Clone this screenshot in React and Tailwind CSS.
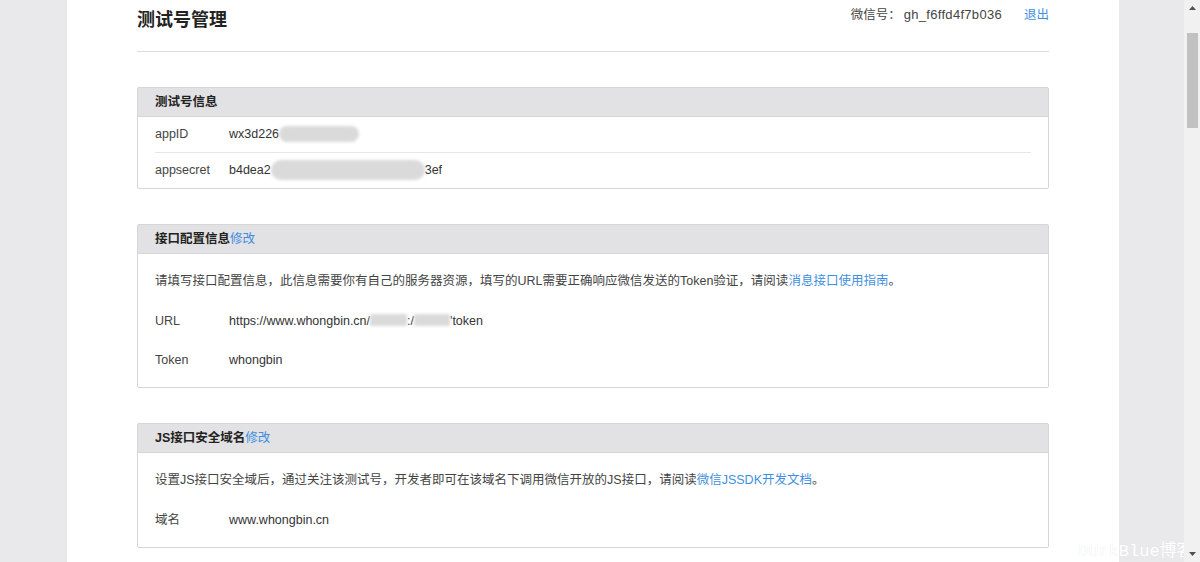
import React from "react";

const font = { fontFamily: '"Liberation Sans", "Noto Sans CJK SC", sans-serif' };

function Blob({ w, h = "h-[16px]", round = "rounded-full" }) {
    // mosaic-ish blur that hides part of a secret
    return <span className={`inline-block ${w} ${h} ${round} bg-[#dadada] blur-[1.5px] align-middle -mt-[2px]`}></span>;
}

function Panel({ title, edit, children }) {
    return (
        <div className="border border-[#d6d6d8] rounded-[2px] mb-[35px]">
            <div className="h-[29px] bg-[#e2e1e3] border-b border-[#d6d6d8] px-[17px] flex items-center font-bold text-[#222]">
                {title}
                {edit && <a className="text-[#3f8fe0] font-normal">修改</a>}
            </div>
            {children}
        </div>
    );
}

function Row({ label, children, className = "h-[40px]" }) {
    return (
        <div className={`flex items-center ${className}`}>
            <div className="w-[74px] text-[#444]">{label}</div>
            <div className="text-[#333]">{children}</div>
        </div>
    );
}

export default function App() {
    return (
        <div className="h-[562px] w-full overflow-hidden flex bg-[#e9e9ec] relative text-[12.5px] text-[#333]" style={font}>
            <div className="w-[67px] shrink-0"></div>

            {/* main page */}
            <div className="w-[1052px] shrink-0 bg-white px-[70px]">
                <div className="h-[52px] border-b border-[#dcdcdc] flex items-start justify-between">
                    <h1 className="text-[18px] font-bold text-[#222] leading-[28px] pt-[6px]">测试号管理</h1>
                    <div className="pt-[5px] leading-[20px] flex text-[#444]">
                        <span>微信号：</span>
                        <span className="ml-[3px] text-[13px] tracking-[0.3px]">gh_f6ffd4f7b036</span>
                        <a className="ml-[22px] text-[#3f8fe0]">退出</a>
                    </div>
                </div>

                <div className="pt-[35px]">
                    <Panel title="测试号信息">
                        <div className="px-[17px]">
                            <Row label="appID" className="h-[36px] border-b border-[#e6e6e6]">
                                wx3d226<Blob w="w-[80px]" />
                            </Row>
                            <Row label="appsecret" className="h-[35px]">
                                b4dea2<Blob w="w-[154px]" h="h-[20px]" />3ef
                            </Row>
                        </div>
                    </Panel>

                    <Panel title="接口配置信息" edit>
                        <div className="px-[17px] pt-[7px] pb-[7px]">
                            <div className="h-[40px] flex items-center text-[#444]">
                                请填写接口配置信息，此信息需要你有自己的服务器资源，填写的URL需要正确响应微信发送的Token验证，请阅读
                                <a className="text-[#3f8fe0]">消息接口使用指南</a>。
                            </div>
                            <Row label="URL">
                                https://www.whongbin.cn/
                                <Blob w="w-[37px]" h="h-[12px]" round="rounded-[1px]" />
                                :/
                                <Blob w="w-[36px]" h="h-[12px]" round="rounded-[1px]" />
                                'token
                            </Row>
                            <Row label="Token" className="h-[39px]">whongbin</Row>
                        </div>
                    </Panel>

                    <Panel title={<span>JS接口安全域名</span>} edit>
                        <div className="px-[17px] pt-[7px] pb-[7px]">
                            <div className="h-[40px] flex items-center text-[#444]">
                                设置JS接口安全域后，通过关注该测试号，开发者即可在该域名下调用微信开放的JS接口，请阅读
                                <a className="text-[#3f8fe0]">微信JSSDK开发文档</a>。
                            </div>
                            <Row label="域名">www.whongbin.cn</Row>
                        </div>
                    </Panel>
                </div>
            </div>

            <div className="flex-1"></div>

            {/* watermark, sits under the scrollbar */}
            <div className="absolute left-[1078px] bottom-[0px] text-[17px] leading-[20px] text-white whitespace-nowrap [text-shadow:0_0_1px_#dedede]"
                 style={{ fontFamily: '"Liberation Mono", "Noto Sans CJK SC", monospace' }}>
                DurkBlue博客
            </div>

            {/* scrollbar */}
            <div className="relative z-10 w-[16px] shrink-0 bg-[#f1f1f1] flex flex-col items-center">
                <div className="h-[16px] flex items-center justify-center">
                    <svg width="7" height="4" viewBox="0 0 7 4"><path d="M3.5 0L7 4H0z" fill="#505050" /></svg>
                </div>
                <div className="mt-[17px] w-[11px] h-[95px] bg-[#c1c1c1]"></div>
                <div className="flex-1"></div>
                <div className="h-[16px] flex items-center justify-center">
                    <svg width="7" height="4" viewBox="0 0 7 4"><path d="M0 0H7L3.5 4z" fill="#505050" /></svg>
                </div>
            </div>
        </div>
    );
}
